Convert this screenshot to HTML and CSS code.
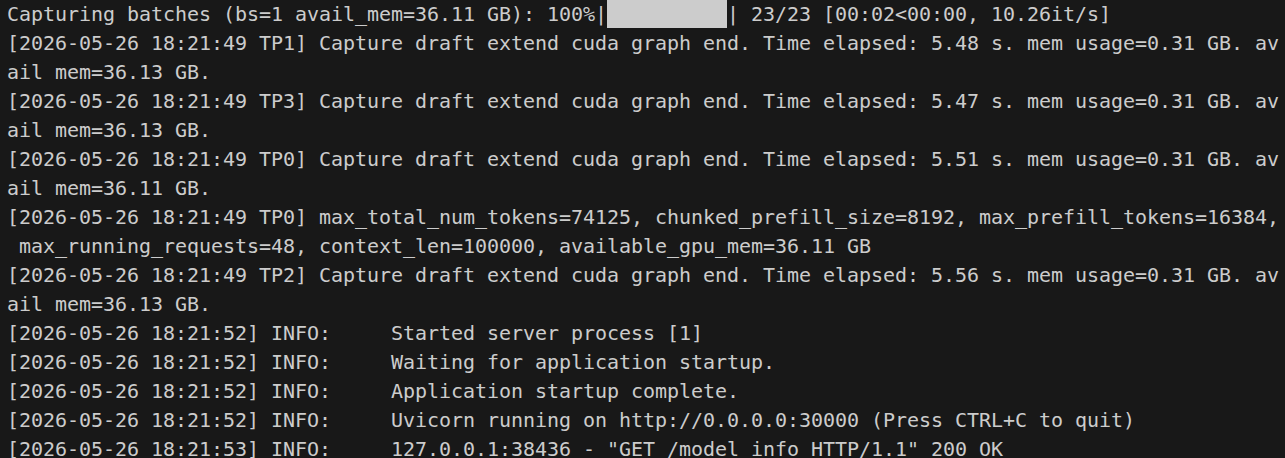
FILE: index.html
```html
<!DOCTYPE html>
<html lang="en">
<head>
<meta charset="utf-8">
<title>Terminal</title>
<link rel="stylesheet" href="styles.css">
</head>
<body>
<pre class="term">Capturing batches (bs=1 avail_mem=36.11 GB): 100%|<span class="bar"></span>| 23/23 [00:02&lt;00:00, 10.26it/s]
[2026-05-26 18:21:49 TP1] Capture draft extend cuda graph end. Time elapsed: 5.48 s. mem usage=0.31 GB. av
ail mem=36.13 GB.
[2026-05-26 18:21:49 TP3] Capture draft extend cuda graph end. Time elapsed: 5.47 s. mem usage=0.31 GB. av
ail mem=36.13 GB.
[2026-05-26 18:21:49 TP0] Capture draft extend cuda graph end. Time elapsed: 5.51 s. mem usage=0.31 GB. av
ail mem=36.11 GB.
[2026-05-26 18:21:49 TP0] max_total_num_tokens=74125, chunked_prefill_size=8192, max_prefill_tokens=16384,
 max_running_requests=48, context_len=100000, available_gpu_mem=36.11 GB
[2026-05-26 18:21:49 TP2] Capture draft extend cuda graph end. Time elapsed: 5.56 s. mem usage=0.31 GB. av
ail mem=36.13 GB.
[2026-05-26 18:21:52] INFO:     Started server process [1]
[2026-05-26 18:21:52] INFO:     Waiting for application startup.
[2026-05-26 18:21:52] INFO:     Application startup complete.
[2026-05-26 18:21:52] INFO:     Uvicorn running on http://0.0.0.0:30000 (Press CTRL+C to quit)
[2026-05-26 18:21:53] INFO:     127.0.0.1:38436 - "GET /model_info HTTP/1.1" 200 OK</pre>
</body>
</html>
```
FILE: styles.css
```css
html, body {
  margin: 0;
  padding: 0;
  background: #181818;
  overflow: hidden;
}
.term {
  margin: 0;
  padding: 0 0 0 7px;
  font-family: "DejaVu Sans Mono", "Liberation Mono", monospace;
  font-size: 20px;
  letter-spacing: -0.04px;
  line-height: 29px;
  color: #cccccc;
  white-space: pre;
}
.bar {
  display: inline-block;
  width: 120px;
  height: 28px;
  vertical-align: top;
  background: #cccccc;
}
```
